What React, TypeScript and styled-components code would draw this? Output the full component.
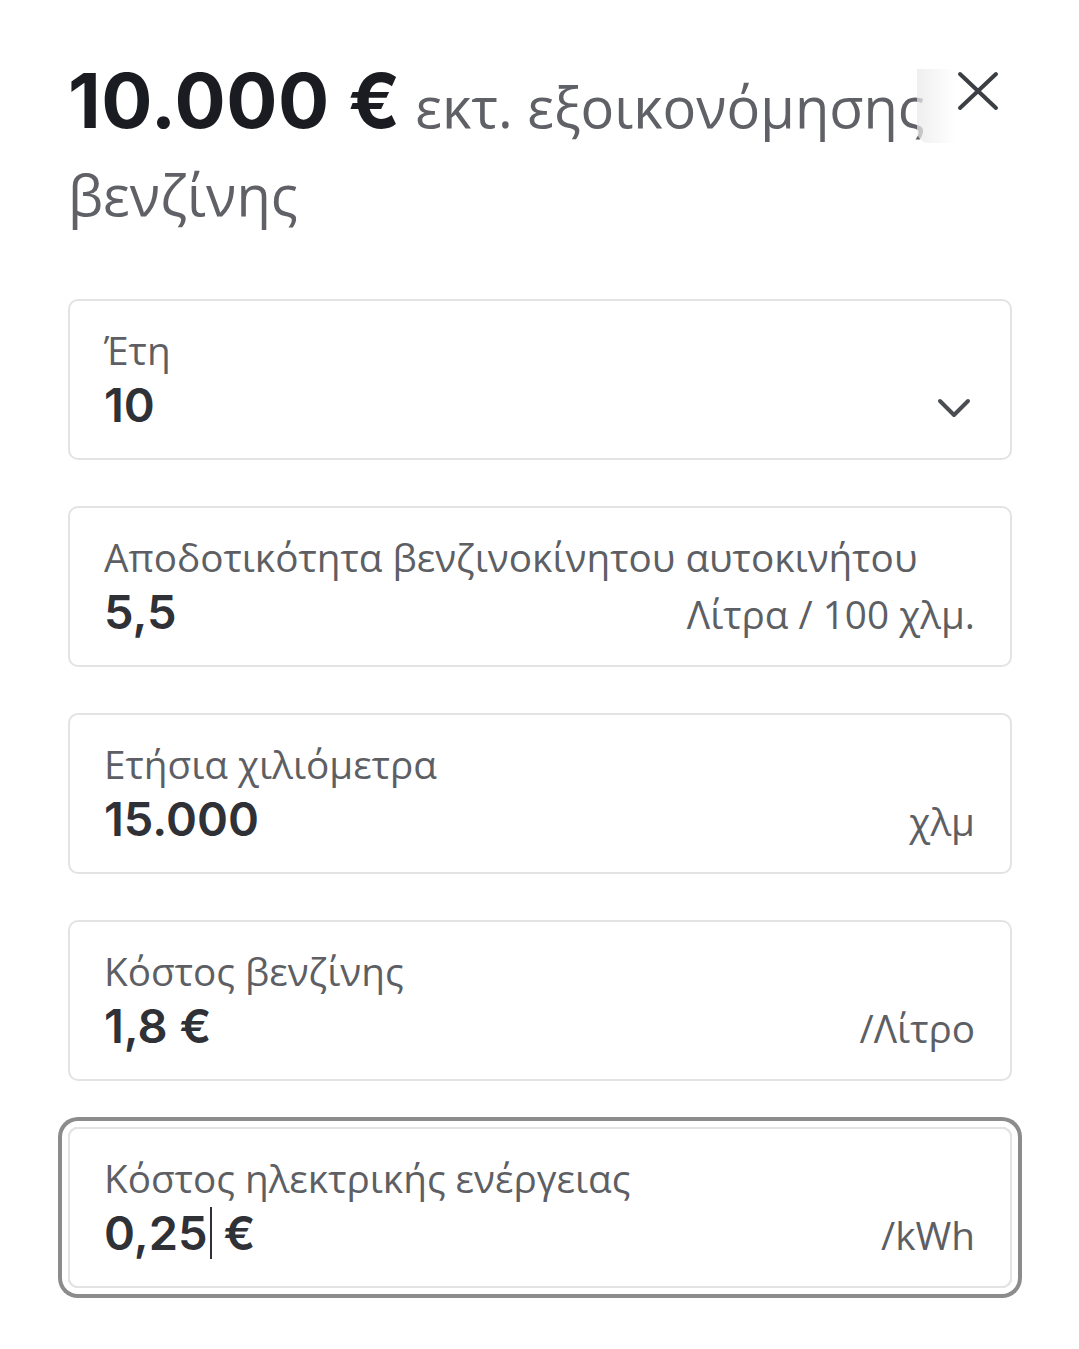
import React from 'react'
import styled, { createGlobalStyle } from 'styled-components'

const GlobalStyle = createGlobalStyle`
  html, body {
    margin: 0;
    padding: 0;
    background: #ffffff;
  }
  body {
    font-family: "Open Sans", "Noto Sans", sans-serif;
  }
`

const Page = styled.div`
  padding: 56px 67px 40px 68px;
`

const Header = styled.header`
  position: relative;
  margin-bottom: 61px;
`

const Title = styled.h1`
  margin: 0;
  font-weight: 400;
  line-height: 88px;
  color: #5f6166;
  font-size: 56px;
  font-family: "Open Sans", "Noto Sans", sans-serif;
`

const Amount = styled.span`
  font-family: Inter, "Noto Sans", sans-serif;
  font-weight: 700;
  font-size: 76px;
  color: #1a1c21;
  letter-spacing: 0.5px;
`

const CloseButton = styled.button`
  position: absolute;
  top: -5px;
  right: 4px;
  width: 80px;
  height: 80px;
  border: 0;
  padding: 0 0 0 20px;
  background: #fff;
  display: flex;
  align-items: center;
  justify-content: center;
  cursor: pointer;

  &::before {
    content: '';
    position: absolute;
    left: -11px;
    top: 18px;
    width: 38px;
    height: 74px;
    border-radius: 0 0 0 12px;
    background: linear-gradient(to right, rgba(232, 232, 232, 0.7), #ffffff);
  }
`

const Fields = styled.div`
  display: flex;
  flex-direction: column;
  gap: 46px;
`

const FieldBox = styled.div<{ $focused?: boolean }>`
  height: 161px;
  box-sizing: border-box;
  border: 2px solid #e3e3e3;
  border-radius: 10px;
  padding: 24px 35px 0 34px;
  display: flex;
  flex-direction: column;
  box-shadow: ${p => (p.$focused ? '0 0 0 6px #ffffff, 0 0 0 10px #8c8c8c' : 'none')};
`

const Label = styled.div`
  font-size: 38.7px;
  line-height: 50px;
  color: #5d5f64;
  white-space: nowrap;
`

const ValueRow = styled.div`
  display: flex;
  align-items: baseline;
  justify-content: space-between;
  height: 60px;
`

const Value = styled.div`
  font-family: Inter, "Noto Sans", sans-serif;
  font-weight: 600;
  font-size: 47px;
  line-height: 60px;
  color: #2f3136;
  display: flex;
  align-items: center;
`

const Unit = styled.div`
  font-size: 38.7px;
  color: #5d5f64;
  white-space: nowrap;
`

const Caret = styled.span`
  display: inline-block;
  width: 2px;
  height: 52px;
  background: #2f3136;
  margin: 0 12px 0 2px;
`

const Chevron = styled.svg`
  align-self: center;
  margin: 6px 4px 0 0;
`

const Close = () => (
  <svg width="42" height="40" viewBox="0 0 42 40" fill="none">
    <path d="M3 3 L39 37 M39 3 L3 37" stroke="#3b3e43" strokeWidth="4" strokeLinecap="round" />
  </svg>
)

type FieldProps = {
  label: string
  value: React.ReactNode
  unit?: React.ReactNode
  focused?: boolean
}

const Field = ({ label, value, unit, focused }: FieldProps) => (
  <FieldBox $focused={focused}>
    <Label>{label}</Label>
    <ValueRow>
      <Value>{value}</Value>
      {unit}
    </ValueRow>
  </FieldBox>
)

export default function App() {
  return (
    <Page>
      <GlobalStyle />
      <Header>
        <Title>
          <Amount>10.000 €</Amount> εκτ. εξοικονόμησης βενζίνης
        </Title>
        <CloseButton aria-label="Κλείσιμο">
          <Close />
        </CloseButton>
      </Header>

      <Fields>
        <Field
          label="Έτη"
          value="10"
          unit={
            <Chevron width="34" height="22" viewBox="0 0 34 22" fill="none">
              <path d="M3 4 L17 18 L31 4" stroke="#4a4d52" strokeWidth="4" strokeLinecap="round" strokeLinejoin="round" />
            </Chevron>
          }
        />
        <Field
          label="Αποδοτικότητα βενζινοκίνητου αυτοκινήτου"
          value="5,5"
          unit={<Unit>Λίτρα / 100 χλμ.</Unit>}
        />
        <Field label="Ετήσια χιλιόμετρα" value="15.000" unit={<Unit>χλμ</Unit>} />
        <Field label="Κόστος βενζίνης" value="1,8 €" unit={<Unit>/Λίτρο</Unit>} />
        <Field
          label="Κόστος ηλεκτρικής ενέργειας"
          value={<>0,25<Caret />€</>}
          unit={<Unit>/kWh</Unit>}
          focused
        />
      </Fields>
    </Page>
  )
}
